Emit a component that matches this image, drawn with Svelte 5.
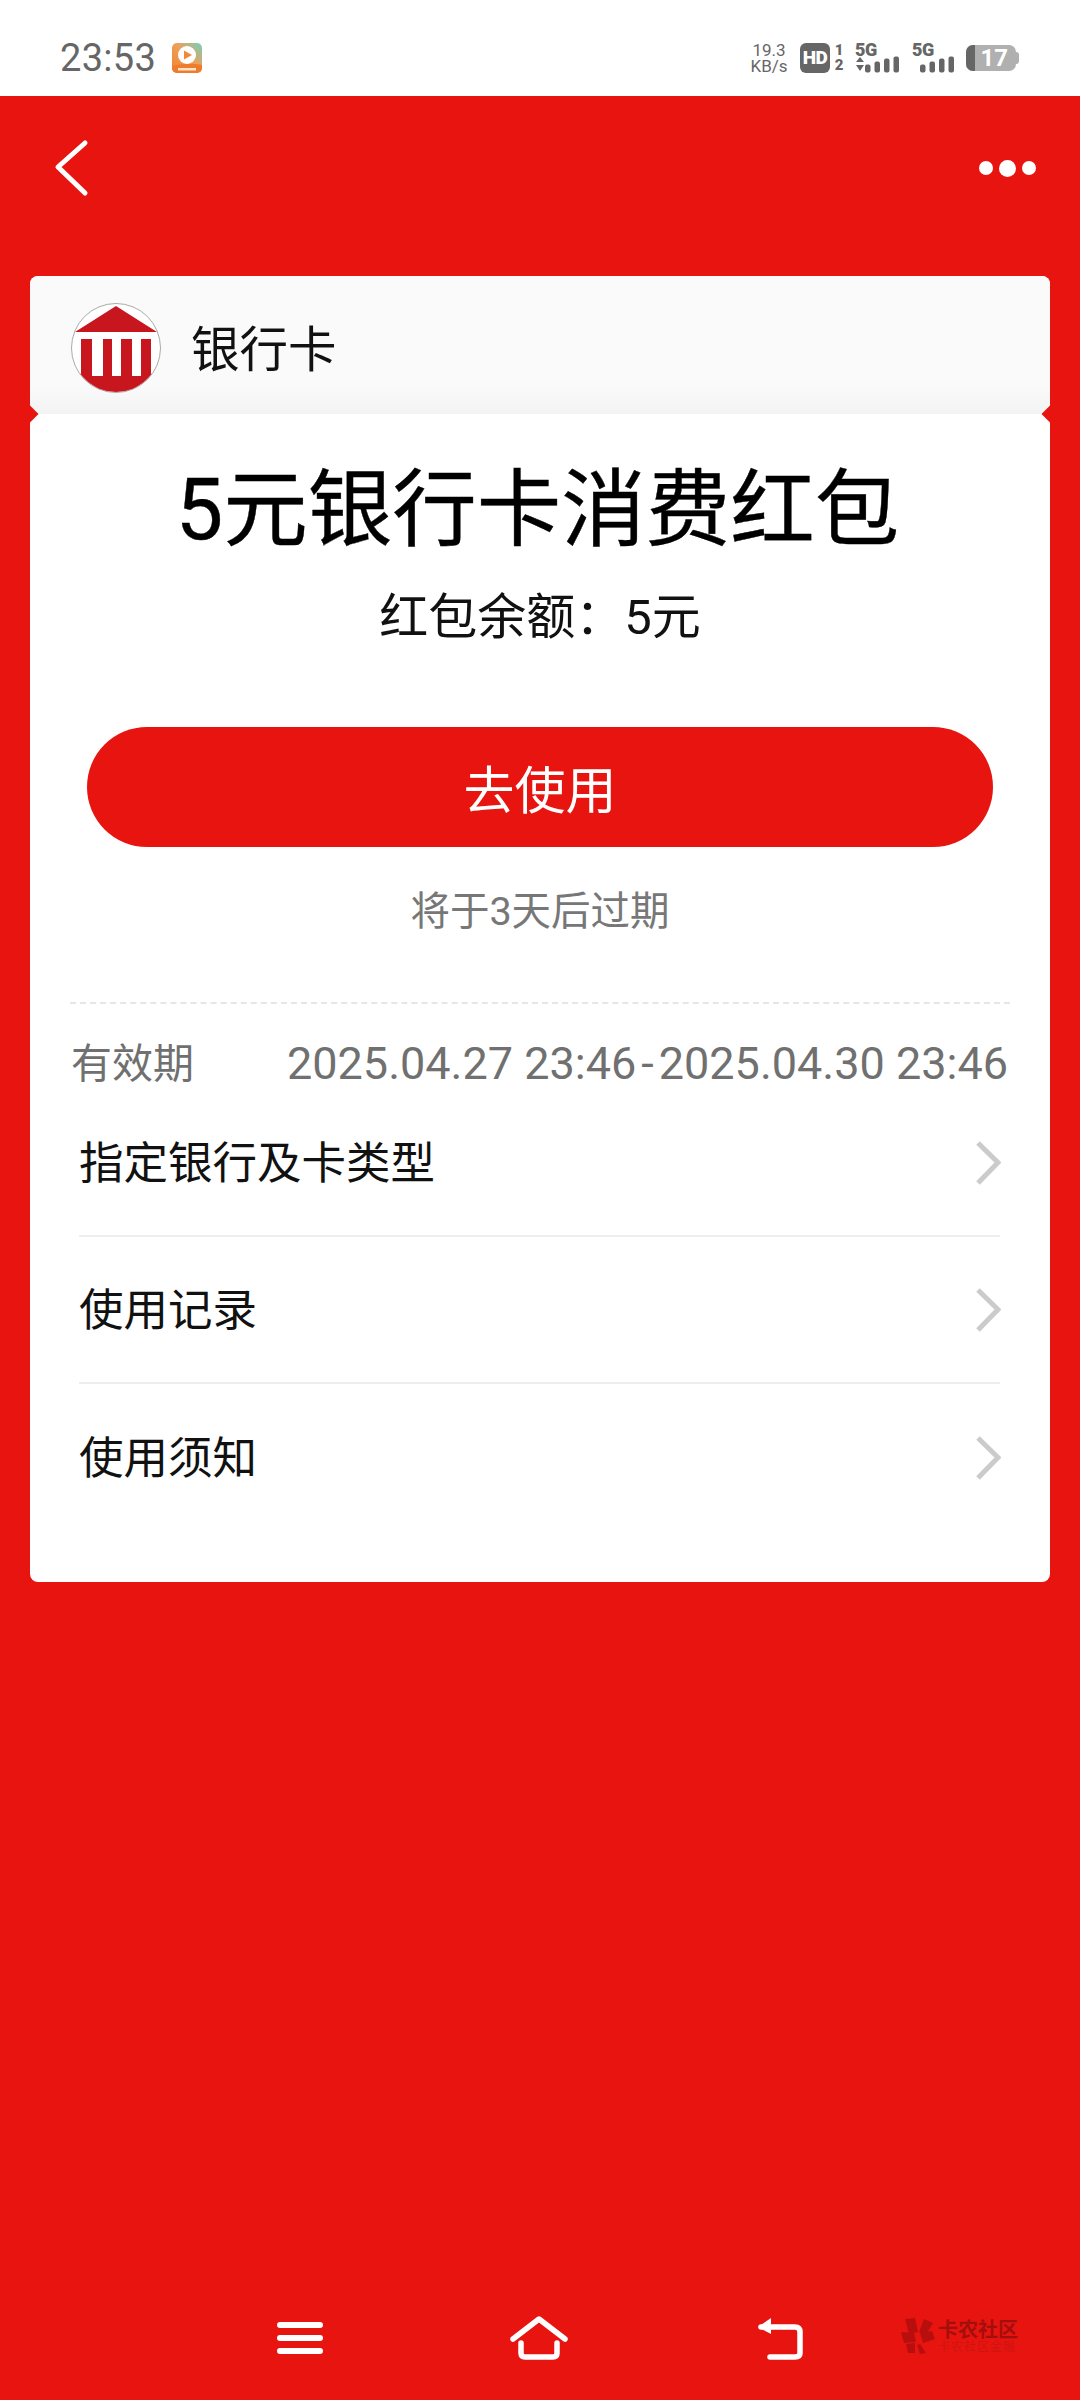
<script>
  const rows = ['指定银行及卡类型', '使用记录', '使用须知'];
  const bars = [
    { x: 0, h: 8 },
    { x: 9.5, h: 11 },
    { x: 19, h: 14 },
    { x: 28.5, h: 16 }
  ];
</script>

<div class="page">
  <div class="status">
    <div class="status-left">
      <span class="time">23:53</span>
      <svg class="app-icon" viewBox="0 0 30 30" width="30" height="30">
        <defs>
          <linearGradient id="appbg" x1="0" y1="1" x2="1" y2="0">
            <stop offset="0" stop-color="#f0812f" />
            <stop offset="0.55" stop-color="#eea05a" />
            <stop offset="1" stop-color="#6fd2bf" />
          </linearGradient>
        </defs>
        <rect width="30" height="30" rx="5" fill="url(#appbg)" />
        <path d="M0 23 Q15 19 30 22 V25 a5 5 0 0 1 -5 5 H5 a5 5 0 0 1 -5 -5Z" fill="#ef7b2d" />
        <circle cx="15" cy="12" r="9" fill="#fff" />
        <path d="M12 7.5 L20 12 L12 16.5Z" fill="#f08a3a" />
        <rect x="6" y="25" width="18" height="2.5" fill="#fde3c8" />
      </svg>
    </div>
    <div class="status-right">
      <div class="speed"><span>19.3</span><span>KB/s</span></div>
      <div class="hd">HD</div>
      <div class="sims"><span>1</span><span>2</span></div>
      <div class="net first">
        <span class="five-g">5G</span>
        <svg viewBox="0 0 46 30" width="46" height="30">
          <path d="M1 19 L5 14 L9 19Z M1 22 L5 28 L9 22Z" fill="#666" />
          {#each bars as b}
            <rect x={b.x + 10} y={29.5 - b.h} width="5.5" height={b.h} rx="2" fill="#666" />
          {/each}
        </svg>
      </div>
      <div class="net second">
        <span class="five-g">5G</span>
        <svg viewBox="0 0 36 30" width="36" height="30">
          {#each bars as b}
            <rect x={b.x} y={29.5 - b.h} width="5.5" height={b.h} rx="2" fill="#666" />
          {/each}
        </svg>
      </div>
      <div class="battery">
        <div class="cell">
          <div class="level"></div>
          <span>17</span>
        </div>
        <div class="nub"></div>
      </div>
    </div>
  </div>

  <main class="main">
    <div class="nav">
      <svg viewBox="0 0 36 60" width="36" height="60">
        <path d="M32 4 L5 28 L32 54" fill="none" stroke="#fff" stroke-width="5" stroke-linecap="round" stroke-linejoin="round" />
      </svg>
      <div class="dots"><i></i><i class="big"></i><i></i></div>
    </div>

    <section class="card">
      <header class="card-head">
        <svg class="bank" viewBox="0 0 90 90" width="90" height="90">
          <defs>
            <clipPath id="circ"><circle cx="45" cy="45" r="44" /></clipPath>
          </defs>
          <circle cx="45" cy="45" r="44.5" fill="#fff" stroke="#a9a9a9" />
          <g clip-path="url(#circ)">
            <path d="M4 29 L45 3 L86 29Z" fill="#c8161f" />
            <path d="M10 36 H21 V73 H32 V36 H41 V73 H50 V36 H61 V73 H70 V36 H80 V70 L90 90 H0 L10 70Z" fill="#c8161f" />
          </g>
        </svg>
        <span>银行卡</span>
      </header>

      <div class="card-body">
        <h1>5元银行卡消费红包</h1>
        <p class="balance">红包余额：5元</p>
        <button class="use">去使用</button>
        <p class="expire">将于3天后过期</p>

        <div class="validity">
          <span>有效期</span>
          <span class="dates">2025.04.27 23:46<span class="dash">-</span>2025.04.30 23:46</span>
        </div>

        <ul class="rows">
          {#each rows as row}
            <li>
              <span>{row}</span>
              <svg viewBox="0 0 26 44" width="26" height="44">
                <path d="M3 2 L23 21.5 L3 42" fill="none" stroke="#cbcbcb" stroke-width="5" />
              </svg>
            </li>
          {/each}
        </ul>
      </div>
    </section>

    <footer class="bottom">
      <svg class="menu" viewBox="0 0 46 34" width="46" height="34">
        <path d="M3 4 H43 M3 17 H43 M3 30 H43" stroke="#fff" stroke-width="6" stroke-linecap="round" />
      </svg>
      <svg class="home" viewBox="0 0 58 44" width="58" height="44">
        <path d="M3 23 L29 3 L55 23" fill="none" stroke="#fff" stroke-width="5.5" stroke-linecap="round" stroke-linejoin="round" />
        <path d="M11 27 V37 Q11 41 15 41 H43 Q47 41 47 37 V27" fill="none" stroke="#fff" stroke-width="5.5" stroke-linecap="round" />
      </svg>
      <svg class="back" viewBox="0 0 46 44" width="46" height="44">
        <path d="M4 10 H38 Q43 10 43 15 V36 Q43 40 38 40 H13" fill="none" stroke="#fff" stroke-width="5.5" stroke-linecap="round" />
        <path d="M14 1 L1 10 L14 17Z" fill="#fff" />
      </svg>
      <div class="mark">
        <svg viewBox="0 0 36 36" width="36" height="36">
          <g fill="#b80f0e">
            <path d="M5 1 L15 0 L18 14 L9 16Z" />
            <path d="M24 1 L33 5 L26 17 L19 14Z" />
            <path d="M1 14 L14 15 L16 24 L4 25Z" />
            <path d="M20 15 L32 13 L35 21 L23 25Z" />
            <path d="M6 26 L15 25 L15 35 L8 35Z" />
            <path d="M20 26 L26 35 L20 36 L17 27Z" />
          </g>
        </svg>
        <div class="mark-text">
          <span>卡农社区</span>
          <small>卡农社区金融</small>
        </div>
      </div>
    </footer>
  </main>
</div>

<style>
  :global(body) {
    margin: 0;
    background: #e81410;
  }

  .page {
    width: 1080px;
    height: 2400px;
    display: flex;
    flex-direction: column;
    font-family: Roboto, "Noto Sans CJK SC", sans-serif;
    overflow: hidden;
  }

  .status {
    height: 96px;
    flex: none;
    background: #fff;
    display: flex;
    justify-content: space-between;
    align-items: center;
    padding: 20px 60px 0 60px;
    color: #666;
    box-sizing: border-box;
  }

  .status-left {
    display: flex;
    align-items: center;
    gap: 16px;
  }

  .time {
    font-size: 38px;
    letter-spacing: 0.3px;
  }

  .status-right {
    display: flex;
    align-items: center;
    height: 32px;
  }

  .speed {
    display: flex;
    flex-direction: column;
    align-items: center;
    width: 38px;
    font-size: 17px;
    line-height: 16px;
    margin-right: 12px;
  }

  .hd {
    width: 30px;
    height: 30px;
    border-radius: 6px;
    background: #666;
    color: #fff;
    font-size: 19px;
    font-weight: 900;
    line-height: 30px;
    text-align: center;
    letter-spacing: -0.5px;
  }

  .sims {
    display: flex;
    flex-direction: column;
    width: 12px;
    margin-left: 3px;
    font-size: 15px;
    font-weight: 900;
    line-height: 15px;
    text-align: center;
  }

  .net {
    position: relative;
    height: 30px;
    display: flex;
    align-items: flex-end;
    font-weight: 900;
  }

  .net.first {
    margin-left: 10px;
    width: 46px;
  }

  .net.second {
    margin-left: 11px;
    width: 44px;
    justify-content: flex-end;
  }

  .five-g {
    position: absolute;
    left: 0;
    top: -2px;
    font-size: 18px;
    line-height: 18px;
    letter-spacing: -0.5px;
  }

  .battery {
    display: flex;
    align-items: center;
    width: 54px;
    margin-left: 10px;
  }

  .cell {
    position: relative;
    width: 50px;
    height: 26px;
    border-radius: 7px;
    background: #b0b0b0;
    color: #fff;
    font-size: 24px;
    font-weight: 700;
    line-height: 26px;
    text-align: right;
    padding-right: 8px;
    box-sizing: border-box;
  }

  .nub {
    width: 3px;
    height: 12px;
    border-radius: 0 3px 3px 0;
    background: #b0b0b0;
  }

  .level {
    position: absolute;
    left: 0;
    top: 0;
    bottom: 0;
    width: 9px;
    border-radius: 7px 0 0 7px;
    background: #666;
  }

  .main {
    flex: 1;
    display: flex;
    flex-direction: column;
    background: #e81410;
  }

  .nav {
    height: 180px;
    flex: none;
    display: flex;
    justify-content: space-between;
    align-items: flex-start;
    padding: 43px 44px 0 53px;
    box-sizing: border-box;
  }

  .dots {
    display: flex;
    align-items: center;
    gap: 6px;
    height: 30px;
    margin-top: 14px;
  }

  .dots i {
    width: 14px;
    height: 14px;
    border-radius: 50%;
    background: #fff;
  }

  .dots i.big {
    width: 17px;
    height: 17px;
  }

  .card {
    position: relative;
    margin: 0 30px;
    height: 1306px;
    flex: none;
    border-radius: 8px;
    background: #fff;
    overflow: hidden;
  }

  .card::before,
  .card::after {
    content: "";
    position: absolute;
    top: 132px;
    width: 12px;
    height: 12px;
    background: #e81410;
    transform: rotate(45deg);
  }

  .card::before {
    left: -6px;
  }

  .card::after {
    right: -6px;
  }

  .card-head {
    height: 138px;
    display: flex;
    align-items: center;
    gap: 30px;
    padding: 5px 0 0 41px;
    box-sizing: border-box;
    background: linear-gradient(#fafafa 0, #fafafa 80%, #f3f3f3 100%);
    color: #111;
    font-size: 48.5px;
  }

  .card-head span {
    margin-top: -3px;
  }

  .card-body {
    padding: 0 40px;
    display: flex;
    flex-direction: column;
    align-items: center;
  }

  h1 {
    margin: 47px 5px 0 0;
    font-size: 84.5px;
    font-weight: 400;
    line-height: 100px;
    color: #000;
    -webkit-text-stroke: 0.4px #000;
  }

  .balance {
    margin: 27px 0 0;
    font-size: 49px;
    line-height: 60px;
    color: #111;
  }

  .use {
    margin: 79px 0 0;
    width: 906px;
    height: 120px;
    flex: none;
    border: none;
    border-radius: 60px;
    background: #e81410;
    color: #fff;
    font-family: inherit;
    font-size: 51px;
  }

  .expire {
    margin: 41px 0 0;
    font-size: 39.5px;
    line-height: 48px;
    color: #777;
  }

  .validity {
    align-self: stretch;
    margin-top: 66px;
    padding: 36px 0 0 1px;
    border-top: 2px dashed #e6e6e6;
    display: flex;
    justify-content: space-between;
    align-items: center;
    font-size: 41px;
    line-height: 48px;
    color: #707070;
  }

  .dates {
    font-size: 45px;
    white-space: nowrap;
    margin-right: 2px;
  }

  .dash {
    margin: 0 5px;
  }

  .rows {
    list-style: none;
    align-self: stretch;
    margin: 2px 10px 0 9px;
    padding: 0;
  }

  .rows li {
    height: 147px;
    display: flex;
    justify-content: space-between;
    align-items: center;
    border-bottom: 2px solid #eeeeee;
    box-sizing: border-box;
    font-size: 44.5px;
    color: #111;
  }

  .rows li:last-child {
    border-bottom: none;
  }

  .rows li span {
    padding-bottom: 6px;
  }

  .rows svg {
    margin-right: -1px;
  }

  .bottom {
    margin-top: auto;
    height: 96px;
    flex: none;
    position: relative;
    display: flex;
    align-items: flex-start;
    padding: 17px 0 0 277px;
    box-sizing: border-box;
  }

  .home {
    margin-left: 187px;
    margin-top: -5px;
  }

  .back {
    margin-left: 189px;
    margin-top: -4px;
  }

  .mark {
    margin-left: 97px;
    margin-top: -3px;
    display: flex;
    gap: 2px;
    color: #a30f0d;
  }

  .mark-text {
    display: flex;
    flex-direction: column;
    margin-top: 2px;
  }

  .mark-text span {
    font-size: 20px;
    font-weight: 700;
    line-height: 20px;
  }

  .mark-text small {
    font-size: 12px;
    line-height: 14px;
    color: #cf1411;
    letter-spacing: 1px;
    white-space: nowrap;
  }
</style>
